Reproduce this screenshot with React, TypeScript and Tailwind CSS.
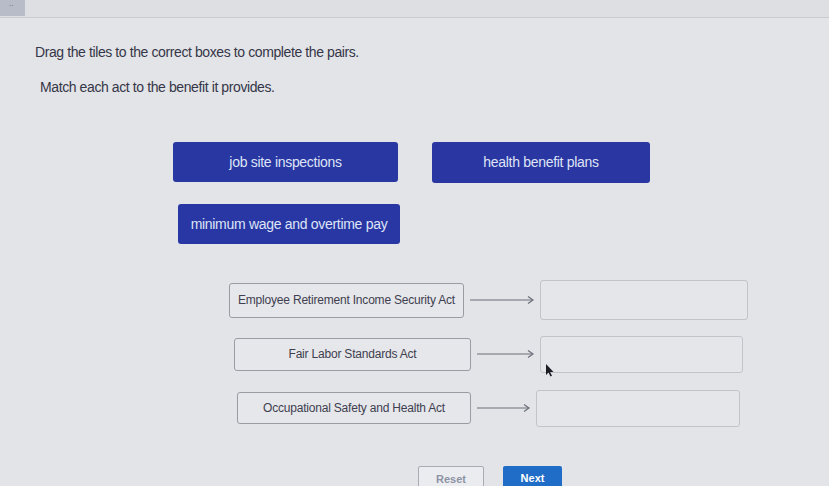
import React from "react";

const rows = [
  { label: "Employee Retirement Income Security Act", lx: 229, lw: 235, lh: 35, tx: 540, tw: 208, th: 40 },
  { label: "Fair Labor Standards Act", lx: 234, lw: 237, lh: 33, tx: 540, tw: 203, th: 37 },
  { label: "Occupational Safety and Health Act", lx: 237, lw: 234, lh: 32, tx: 536, tw: 204, th: 37 },
];

function Arrow({ w }: { w: number }) {
  const end = w - 8;
  return (
    <svg width={w} height="10" viewBox={`0 0 ${w} 10`} className="shrink-0">
      <line x1="6" y1="5" x2={end} y2="5" stroke="#6b6f7a" strokeWidth="1.2" />
      <path d={`M${end - 4} 1.5 L${end + 1} 5 L${end - 4} 8.5`} fill="none" stroke="#6b6f7a" strokeWidth="1.2" />
    </svg>
  );
}

export default function App() {
  return (
    <div
      className="relative w-[829px] h-[486px] overflow-hidden bg-[#e3e4e7] text-[#2f3040]"
      style={{ fontFamily: '"Liberation Sans", Arial, sans-serif' }}
    >
      <div className="h-[18px] bg-[#dedfe2] border-b border-[#cacbcf] flex">
        <div className="w-[25px] h-[16px] bg-[#b8bcc8] text-[8px] text-[#555a70] leading-[8px] pl-[9px]">..</div>
      </div>

      <div className="pl-[35px] pt-[24px] text-[14px] tracking-[-0.4px] text-[#353648]">
        Drag the tiles to the correct boxes to complete the pairs.
      </div>
      <div className="pl-[40px] pt-[14px] text-[14px] tracking-[-0.4px] text-[#353648]">
        Match each act to the benefit it provides.
      </div>

      <div className="flex pl-[173px] pt-[44px] gap-[34px]">
        <div className="w-[225px] h-[40px] rounded-[3px] bg-[#2937a3] flex items-center justify-center text-[14px] text-[#dfe4f6] tracking-[-0.3px]">
          job site inspections
        </div>
        <div className="w-[218px] h-[41px] rounded-[3px] bg-[#2a36a1] flex items-center justify-center text-[14px] text-[#dfe4f6] tracking-[-0.3px]">
          health benefit plans
        </div>
      </div>
      <div className="flex pl-[178px] pt-[21px]">
        <div className="w-[222px] h-[40px] rounded-[3px] bg-[#2937a5] flex items-center justify-center text-[14px] text-[#dfe4f6] tracking-[-0.3px]">
          minimum wage and overtime pay
        </div>
      </div>

      <div className="flex flex-col pt-[36px] gap-[14px]">
        {rows.map((r, i) => (
          <div key={i} className="flex items-center h-[40px]" style={{ paddingLeft: r.lx }}>
            <div
              className="flex items-center justify-center border border-[#9a9ca4] rounded-[3px] bg-[#e6e7ea] text-[12px] text-[#3e4050] tracking-[-0.2px] shrink-0"
              style={{ width: r.lw, height: r.lh }}
            >
              {r.label}
            </div>
            <Arrow w={r.tx - r.lx - r.lw} />
            <div
              className="border border-[#c2c4ca] rounded-[3px] bg-[#e5e6e9] shrink-0"
              style={{ width: r.tw, height: r.th }}
            />
          </div>
        ))}
      </div>

      <div className="flex pl-[418px] pt-[38px] gap-[19px]">
        <div className="w-[66px] h-[30px] border border-[#a9abb2] rounded-[2px] bg-[#ebecef] flex justify-center pt-[6px] text-[11px] leading-[13px] text-[#8d93a5] font-bold">
          Reset
        </div>
        <div className="w-[59px] h-[30px] rounded-[2px] bg-[#1f6dc6] flex justify-center pt-[6px] text-[11px] leading-[13px] text-white font-bold">
          Next
        </div>
      </div>

      <svg className="absolute left-[545px] top-[363px]" width="10" height="14" viewBox="0 0 10 14">
        <path d="M1 1 L1 12 L3.5 9.5 L5.5 13.5 L7 12.8 L5 9 L8.5 9 Z" fill="#1c1c24" />
      </svg>
    </div>
  );
}
